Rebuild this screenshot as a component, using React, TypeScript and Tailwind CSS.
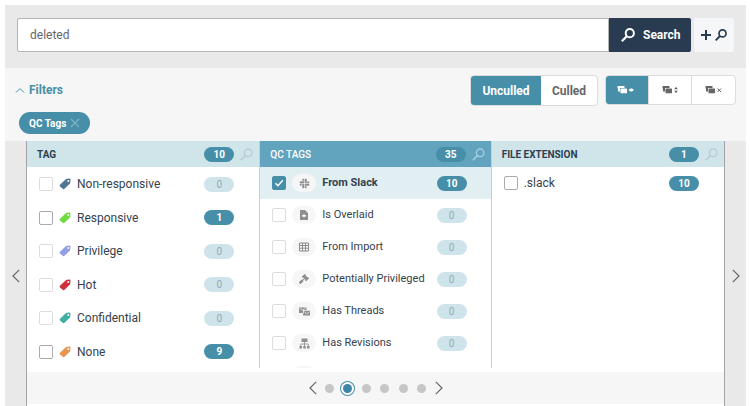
import type { ReactNode } from "react";
import { FaSlack, FaGavel } from "react-icons/fa";
import clsx from "clsx";

type Row = { label?: string; count?: number; icon?: ReactNode; checked?: boolean; muted?: boolean };

const tagRows: Row[] = [
  { label: "Non-responsive", count: 0, icon: <TagIcon className="text-[#4f7596]" />, muted: true },
  { label: "Responsive", count: 1, icon: <TagIcon className="text-[#6ddc41]" /> },
  { label: "Privilege", count: 0, icon: <TagIcon className="text-[#929fe6]" />, muted: true },
  { label: "Hot", count: 0, icon: <TagIcon className="text-[#d02f3c]" />, muted: true },
  { label: "Confidential", count: 0, icon: <TagIcon className="text-[#3fafa0]" />, muted: true },
  { label: "None", count: 9, icon: <TagIcon className="text-[#e8964f]" /> },
];

const qcRows: Row[] = [
  { label: "From Slack", count: 10, icon: <FaSlack className="size-[11px]" />, checked: true },
  { label: "Is Overlaid", count: 0, icon: <FileIcon />, muted: true },
  { label: "From Import", count: 0, icon: <GridIcon />, muted: true },
  { label: "Potentially Privileged", count: 0, icon: <FaGavel className="size-[10px]" />, muted: true },
  { label: "Has Threads", count: 0, icon: <ThreadsIcon />, muted: true },
  { label: "Has Revisions", count: 0, icon: <TreeIcon />, muted: true },
  { muted: true },
];

function TagIcon({ className }: { className: string }) {
  return (
    <svg viewBox="0 0 12 12" className={clsx("size-3 shrink-0", className)} fill="currentColor">
      <path
        fillRule="evenodd"
        d="M6.800 1.300Q7.300.8 8 .8L10.500.6Q11.500.6 11.500 1.600L11.300 4.500Q11.200 5.200 10.700 5.700L5.500 10.800Q4.800 11.500 4 10.900L1 8.400Q.2 7.600 1 6.800zM9.300 1.900a1 1 0 1 0 0 2a1 1 0 1 0 0-2z"
      />
    </svg>
  );
}

function FileIcon() {
  return (
    <svg viewBox="0 0 10 10" className="size-[10px]" fill="currentColor">
      <path fillRule="evenodd" d="M1.500 0H6l3 3v6.500q0 .5-.5.5h-7q-.5 0-.5-.5v-9q0-.5.5-.5zM5 3.800L4.200 5H3v1.500h1.200L5 7.700l.8-1.200H7V5H5.800z" />
    </svg>
  );
}

function GridIcon() {
  return (
    <svg viewBox="0 0 10 10" className="size-[10px]" fill="none" stroke="currentColor">
      <path d="M.5 1h9v8h-9zM.5 3.500h9M.5 6.200h9M3.500 1v8M6.500 1v8" />
    </svg>
  );
}

function ThreadsIcon() {
  return (
    <svg viewBox="0 0 11 9" className="h-[9px] w-[11px]" fill="currentColor">
      <path d="M0 .5h7.500V3H4v3H0z" />
      <path d="M4.800 3.800H11v4.700H4V6.500h.8z" />
      <path d="M.5 1.500l3 1.500 3-1.500M5.500 5l2.300 1.700L10.300 5" fill="none" stroke="#f6f6f6" strokeWidth=".7" />
    </svg>
  );
}

function TreeIcon() {
  return (
    <svg viewBox="0 0 11 11" className="size-[11px]" fill="currentColor">
      <path d="M2.500.5h6v3.500h-6zM.5 8h2.500v2.500H.5zM4.300 8h2.500v2.500H4.300zM8 8h2.500v2.500H8z" />
      <path d="M5.500 4v4M1.700 8V6h7.600v2" fill="none" stroke="currentColor" strokeWidth=".8" />
    </svg>
  );
}

function SearchIcon({ className, thin }: { className?: string; thin?: boolean }) {
  return (
    <svg viewBox="0 0 14 14" className={clsx("shrink-0", className)} fill="none" stroke="currentColor" strokeWidth={thin ? 1.5 : 2}>
      <circle cx="8.800" cy="5.200" r="4.100" />
      <path d="M5.800 8.200L.8 13.200" strokeWidth={thin ? 1.7 : 2.2} />
    </svg>
  );
}

function Chevron({ d, className }: { d: string; className?: string }) {
  return (
    <svg viewBox="0 0 8 14" className={clsx("h-[14px] w-2", className)} fill="none" stroke="#666" strokeWidth="1.200">
      <path d={d} />
    </svg>
  );
}

const LEFT = "M7.200 .8L1 7l6.200 6.200";
const RIGHT = "M.8 .8L7 7L.8 13.200";

function StackIcon({ children }: { children: ReactNode }) {
  return (
    <svg viewBox="0 0 17 8" className="h-2 w-[17px]" fill="currentColor">
      <path d="M.5 0H7.500V2H3v3.500H1V2.500H.5z" />
      <rect x="3.500" y="2.500" width="6.500" height="4.800" rx=".5" />
      {children}
    </svg>
  );
}

function Badge({ count, muted }: { count?: number; muted?: boolean }) {
  return (
    <span
      className={clsx(
        "flex h-[15px] w-[30px] shrink-0 items-center justify-center rounded-full text-[10px]",
        muted ? "bg-[#cfe4ea] text-[#8fa9b9]" : "bg-[#478fa8] font-bold text-white",
      )}
    >
      {count}
    </span>
  );
}

function Check({ row }: { row: Row }) {
  return (
    <span className="relative size-[14px] shrink-0">
      <input
        type="checkbox"
        aria-label={row.label ? undefined : "More"}
        defaultChecked={row.checked}
        className={clsx(
          "peer block size-[14px] appearance-none rounded-xs border bg-white checked:border-[#478fa8] checked:bg-[#478fa8]",
          row.muted ? "border-[#dcdcdc]" : "border-[#aaa]",
        )}
      />
      <svg viewBox="0 0 14 14" className="pointer-events-none absolute inset-0 hidden peer-checked:block" fill="none" stroke="white" strokeWidth="1.400">
        <path d="M3.500 7.200l2.500 2.600 4.800-5.600" />
      </svg>
    </span>
  );
}

function ColumnHeader({ title, count, active }: { title: string; count: number; active?: boolean }) {
  return (
    <header
      className={clsx(
        "flex h-[26px] shrink-0 items-center gap-1.5 pr-1.5 pl-[10px]",
        active ? "bg-[#62a4be] text-white" : "bg-[#d0e5ea] text-[#2b3f50]",
      )}
    >
      <h2 className={clsx("flex-1 text-[10px]", active ? "font-medium" : "font-bold")}>{title}</h2>
      <Badge count={count} />
      <button aria-label={`Search ${title}`} className={active ? "text-[#a5cddd]" : "text-[#b4ced8]"}>
        <SearchIcon thin className="size-[13px]" />
      </button>
    </header>
  );
}

export default function App() {
  return (
    <div className="flex min-h-screen flex-col bg-white pt-[5px] pr-1 pl-[5px] font-[Roboto,sans-serif] text-[#35424e]">
      <form className="flex bg-[#e9e9e9] px-3 pt-[13px] pb-4" onSubmit={(e) => e.preventDefault()}>
        <input
          aria-label="Search query"
          defaultValue="deleted"
          className="h-[34px] min-w-0 flex-1 rounded-l-xs border border-[#b5b5b5] bg-white px-3 text-[12px] text-[#666] outline-none"
        />
        <button type="submit" className="flex w-[82px] items-center gap-2 rounded-r-xs bg-[#283b50] pl-3 text-[12px] font-bold text-white">
          <SearchIcon className="size-[14px]" />
          Search
        </button>
        <button type="button" aria-label="Add search" className="ml-[3px] flex w-10 items-center justify-center gap-1 rounded-xs bg-[#f5f6f7] text-[#283b50]">
          <svg viewBox="0 0 10 10" className="size-[10px]" stroke="currentColor" strokeWidth="2">
            <path d="M5 0v10M0 5h10" />
          </svg>
          <SearchIcon className="size-3" />
        </button>
      </form>

      <div className="flex h-[73px] justify-between bg-[#f6f6f6] px-[10px]">
        <div className="pt-3">
          <button className="flex items-center gap-1 text-[12px] leading-5 font-bold text-[#478fa8]">
            <svg viewBox="0 0 10 6" className="h-1.5 w-[10px]" fill="none" stroke="currentColor">
              <path d="M1 5.500l4-4 4 4" />
            </svg>
            Filters
          </button>
          <button className="mt-3 ml-1 flex h-[22px] items-center gap-1 rounded-full bg-[#478fa8] px-[10px] text-[10px] font-bold text-white">
            QC Tags
            <svg viewBox="0 0 10 10" className="size-[10px]" stroke="#7fb5c7" strokeWidth="1.200">
              <path d="M1 1l8 8M9 1L1 9" />
            </svg>
          </button>
        </div>
        <div className="flex items-start gap-[7px] pt-[7px]">
          <div className="flex h-[31px] overflow-hidden rounded-sm border border-[#dcdcdc] bg-white text-[12px] font-bold">
            <button className="w-[70px] bg-[#478fa8] text-white">Unculled</button>
            <button className="w-14 text-[#666]">Culled</button>
          </div>
          <div className="flex h-[30px] divide-x divide-[#dcdcdc] overflow-hidden rounded-sm border border-[#dcdcdc] bg-white text-[#666]">
            <button aria-label="Collapse horizontally" className="flex w-[43px] items-center justify-center bg-[#478fa8] pr-1 text-white">
              <StackIcon>
                <path d="M11.500 4l2-1.500h1.500L17 4l-2 1.500h-1.500z" />
              </StackIcon>
            </button>
            <button aria-label="Expand vertically" className="flex w-[43px] items-center justify-center">
              <StackIcon>
                <path d="M14 .8l1.800 2.400h-3.600zM14 7.200L12.200 4.800h3.600z" />
              </StackIcon>
            </button>
            <button aria-label="Clear groups" className="flex w-[43px] items-center justify-center">
              <StackIcon>
                <path d="M12.500 2.500l3.500 3.500M16 2.500L12.500 6" stroke="currentColor" />
              </StackIcon>
            </button>
          </div>
        </div>
      </div>

      <div className="flex flex-1 bg-[#e9e9e9]">
        <button aria-label="Scroll left" className="flex w-[21px] shrink-0 items-center justify-center pt-1">
          <Chevron d={LEFT} />
        </button>
        <div className="flex min-w-0 flex-1 flex-col border-x border-[#a3a3a3] bg-white">
          <div className="grid grid-cols-3">
            <section className="flex flex-col">
              <ColumnHeader title="TAG" count={10} />
              <ul className="flex flex-1 flex-col justify-between pt-[7px] pb-[10px]">
                {tagRows.map((row) => (
                  <li key={row.label} className="flex items-center pr-[25px] pl-3">
                    <label className="flex flex-1 items-center gap-1.5 text-[12px] leading-5">
                      <Check row={row} />
                      {row.icon}
                      {row.label}
                    </label>
                    <Badge count={row.count} muted={row.muted} />
                  </li>
                ))}
              </ul>
            </section>

            <section className="mb-1 border-x border-[#a9dbe6]">
              <ColumnHeader title="QC TAGS" count={35} active />
              <ul className="h-[201px] overflow-hidden">
                {qcRows.map((row, i) => (
                  <li key={i} className={clsx("flex h-8 items-center pr-6 pl-3", row.checked && "bg-[#e2eff2]")}>
                    <label className={clsx("flex flex-1 items-center gap-1.5 text-[11px] whitespace-nowrap", row.checked && "font-bold")}>
                      <Check row={row} />
                      <span className="flex h-[18px] w-6 items-center justify-center rounded-full bg-[#f6f6f6] text-[#8e8e8e]">
                        {row.icon}
                      </span>
                      {row.label}
                    </label>
                    <Badge count={row.count} muted={row.muted} />
                  </li>
                ))}
              </ul>
            </section>

            <section>
              <ColumnHeader title="FILE EXTENSION" count={1} />
              <ul>
                <li className="flex h-8 items-center pr-[25px] pl-3">
                  <label className="flex flex-1 items-center gap-1.5 text-[12px]">
                    <Check row={{ label: ".slack", count: 10 }} />
                    .slack
                  </label>
                  <Badge count={10} />
                </li>
              </ul>
            </section>
          </div>

          <nav aria-label="Filter pages" className="flex h-8 items-center justify-center gap-2 bg-[#f6f6f6]">
            <button aria-label="Previous page">
              <Chevron d={LEFT} />
            </button>
            <div className="flex w-[102px] justify-between">
              {[1, 2, 3, 4, 5, 6].map((n) => (
                <button
                  key={n}
                  aria-label={`Page ${n}`}
                  className={clsx(
                    "size-[9px] rounded-full",
                    n === 2 ? "bg-[#3d86a8] ring-1 ring-[#478fa8] ring-offset-2 ring-offset-white" : "bg-[#c6c6c6]",
                  )}
                />
              ))}
            </div>
            <button aria-label="Next page">
              <Chevron d={RIGHT} />
            </button>
          </nav>
        </div>
        <button aria-label="Scroll right" className="flex w-[21px] shrink-0 items-center justify-center pt-1">
          <Chevron d={RIGHT} />
        </button>
      </div>
    </div>
  );
}
